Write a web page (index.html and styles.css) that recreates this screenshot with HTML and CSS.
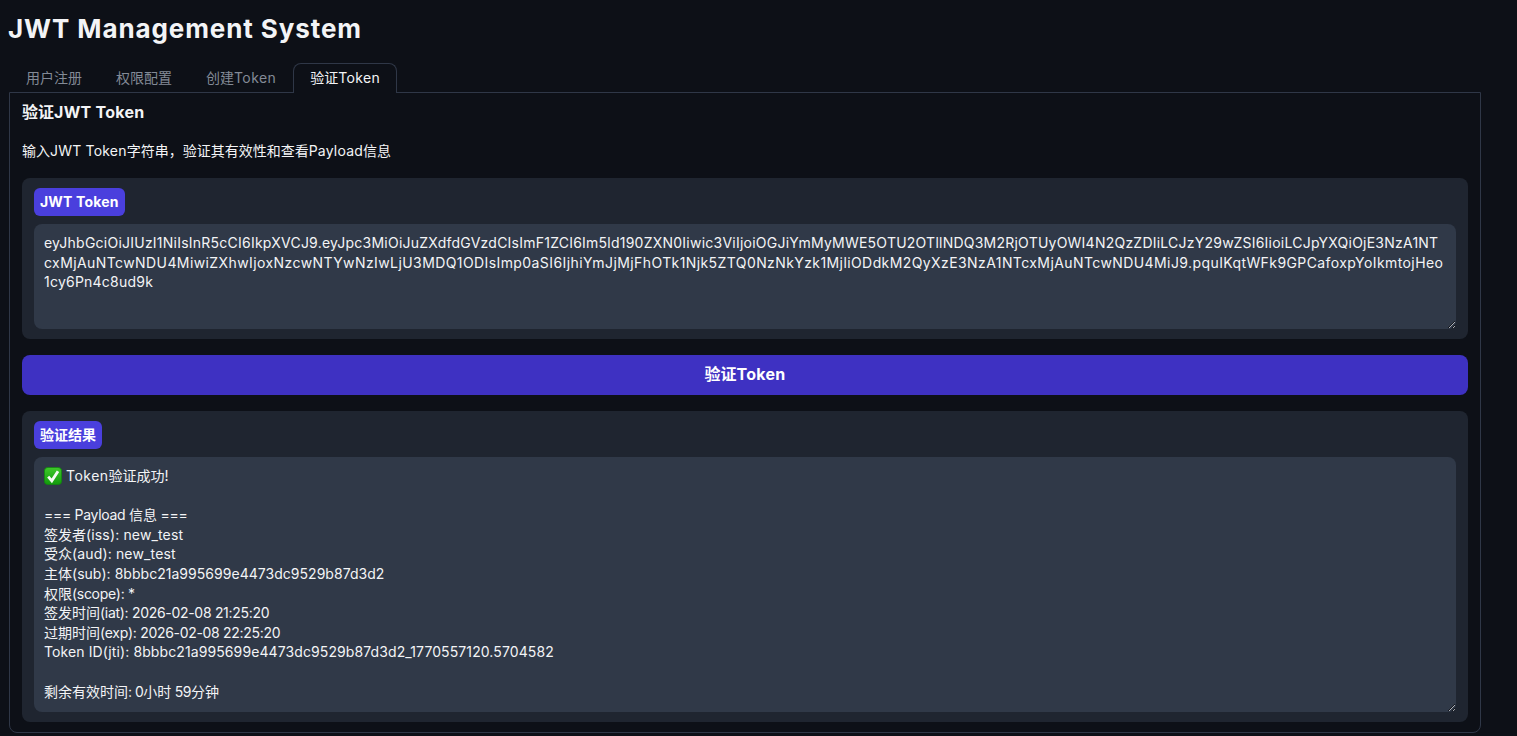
FILE: index.html
```html
<!DOCTYPE html>
<html lang="zh-CN">
<head>
<meta charset="utf-8">
<title>JWT Management System</title>
<link rel="stylesheet" href="styles.css">
</head>
<body>
<main class="app">
  <h1 class="title">JWT Management System</h1>
  <nav class="tabs">
    <button class="tab">用户注册</button>
    <button class="tab">权限配置</button>
    <button class="tab">创建<span class="s">Token</span></button>
    <button class="tab tab-active">验证<span class="s">Token</span></button>
  </nav>
  <section class="panel">
    <h2 class="heading">验证<span class="b">JWT Token</span></h2>
    <p class="intro">输入<span class="i">JWT Token</span>字符串，验证其有效性和查看<span class="i">Payload</span>信息</p>
    <div class="block">
      <span class="label"><span class="c">JWT Token</span></span>
      <div class="field field-token" role="textbox"><span class="t1">eyJhbGciOiJIUzI1NiIsInR5cCI6IkpXVCJ9.eyJpc3MiOiJuZXdfdGVzdCIsImF1ZCI6Im5ld190ZXN0Iiwic3ViIjoiOGJiYmMyMWE5OTU2OTllNDQ3M2RjOTUyOWI4N2QzZDIiLCJzY29wZSI6IioiLCJpYXQiOjE3NzA1NT</span>
<span class="t2">cxMjAuNTcwNDU4MiwiZXhwIjoxNzcwNTYwNzIwLjU3MDQ1ODIsImp0aSI6IjhiYmJjMjFhOTk1Njk5ZTQ0NzNkYzk1MjliODdkM2QyXzE3NzA1NTcxMjAuNTcwNDU4MiJ9.pquIKqtWFk9GPCafoxpYoIkmtojHeo</span>
<span class="t1">1cy6Pn4c8ud9k</span></div>
    </div>
    <button class="submit">验证<span class="b">Token</span></button>
    <div class="block">
      <span class="label">验证结果</span>
      <div class="field field-result" role="textbox"><svg class="check" viewBox="0 0 18 18" aria-label="✅"><defs><linearGradient id="emoji-green" x1="0" y1="0" x2="0" y2="1"><stop offset="0" stop-color="#3fc92a"/><stop offset="1" stop-color="#129a0c"/></linearGradient></defs><rect x="0.4" y="0.4" width="17.2" height="17.2" rx="3.6" fill="url(#emoji-green)" stroke="#0f8a0b" stroke-width="0.8"/><path d="M4.2 9.6 7.8 13.8 14 4.2" fill="none" stroke="#f4fbf2" stroke-width="2.8"/></svg> <span class="l">Token</span>验证成功<span class="l">!</span>

<span class="d">=== Payload </span>信息<span class="d"> ===</span>
签发者<span class="k">(iss): new_test</span>
受众<span class="k">(aud): new_test</span>
主体<span class="h">(sub): 8bbbc21a995699e4473dc9529b87d3d2</span>
权限<span class="d">(scope): *</span>
签发时间<span class="n">(iat): 2026-02-08 21:25:20</span>
过期时间<span class="n">(exp): 2026-02-08 22:25:20</span>
<span class="j">Token ID(jti): 8bbbc21a995699e4473dc9529b87d3d2_1770557120.5704582</span>

剩余有效时间<span class="m">: 0</span>小时<span class="m"> 59</span>分钟</div>
    </div>
  </section>
</main>
</body>
</html>
```

FILE: styles.css
```css
* { box-sizing: border-box; }
html, body { margin: 0; height: 100%; }
body {
  background: #0d1017;
  color: #f3f4f6;
  font-family: Inter, "Noto Sans CJK SC", sans-serif;
  font-size: 14px;
  overflow: hidden;
}
.app { width: 1481px; padding: 13px 0 0 9px; }
.l { letter-spacing: 0.5px; }
.s { letter-spacing: 0.4px; }
.b { letter-spacing: 0.28px; }
.i { letter-spacing: 0.2px; }
.c { letter-spacing: 0.17px; }
.k { letter-spacing: 0.15px; }
.j { letter-spacing: 0.1px; }
.h { letter-spacing: 0.03px; }
.d { letter-spacing: -0.3px; }
.n { letter-spacing: -0.3px; }
.m { letter-spacing: -0.5px; }
.t1 { letter-spacing: 0.235px; }
.t2 { letter-spacing: 0.41px; }
.title {
  margin: 0 0 18px -1px;
  font-size: 26px;
  line-height: 32px;
  font-weight: 700;
  letter-spacing: 0.9px;
}
.tabs { display: flex; height: 30px; position: relative; z-index: 1; margin-bottom: -1px; }
.tab {
  font: inherit;
  color: #838a96;
  background: transparent;
  border: 1px solid transparent;
  border-bottom: 0;
  border-radius: 8px 8px 0 0;
  padding: 0 16px 3px;
  height: 30px;
  white-space: nowrap;
}
.tab-active { color: #f3f4f6; background: #0d1017; border-color: #2f3747; }
.panel {
  border: 1px solid #2f3747;
  border-radius: 0 0 8px 8px;
  padding: 9px 12px 10px;
  display: flex;
  flex-direction: column;
  gap: 16px;
}
.heading { margin: 0 0 -16px; font-size: 16px; line-height: 20px; font-weight: 700; }
.intro { margin: 19px 0 1px; line-height: 20px; }
.block {
  background: #1f2530;
  border-radius: 8px;
  padding: 10px 12px;
  display: flex;
  flex-direction: column;
  align-items: flex-start;
  gap: 8px;
}
.label {
  background: #4a3fdd;
  color: #fff;
  font-weight: 700;
  line-height: 28px;
  height: 28px;
  padding: 0 6px;
  border-radius: 6px;
}
.field {
  width: 100%;
  background: #303948;
  color: #f3f4f6;
  border-radius: 8px;
  padding: 9px 10px 10px;
  line-height: 19.6px;
  white-space: pre-wrap;
  overflow: auto;
  resize: vertical;
}
.field-token { height: 105px; }
.field-result { height: 255px; }
.check { width: 18px; height: 18px; vertical-align: -4px; }
.submit {
  font: inherit;
  font-size: 16px;
  font-weight: 700;
  height: 40px;
  padding: 0 0 5px;
  color: #fff;
  background: #3e31c2;
  border: 0;
  border-radius: 8px;
}
```
